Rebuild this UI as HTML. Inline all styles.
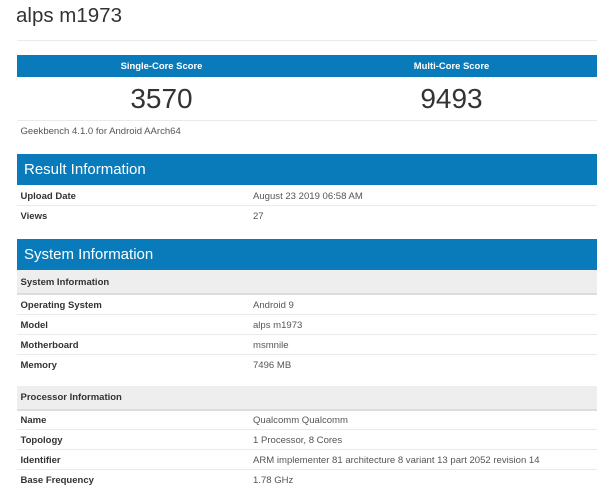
<!DOCTYPE html>
<html><head><meta charset="utf-8"><style>
html,body{margin:0;padding:0;background:#fff;width:600px;height:496px;overflow:hidden}
#p{position:relative;width:600px;height:496px;overflow:hidden;font-family:"Liberation Sans",sans-serif;filter:blur(0.35px)}
#p div{position:absolute;white-space:nowrap}
.b{left:16.5px;width:580px;background:#0a7bba}
.line{left:16.5px;width:580px;height:1px;background:#eaeaea}
.g{left:16.5px;width:580px;height:23px;background:#eeeeee;border-bottom:2px solid #dddddd}
.h{left:24px;color:#fff;font-size:15px;line-height:20px}
.k{left:20.5px;font-size:9.5px;font-weight:bold;color:#333;line-height:14px}
.v{left:253px;font-size:9.55px;color:#555;line-height:14px}
.c{text-align:center;width:290px}
.s{color:#fff;font-size:9.45px;font-weight:bold;line-height:14px;top:60px}
.n{color:#333;font-size:28px;line-height:32px;top:83px}
</style></head><body><div id="p">
<div style="left:16px;top:4px;font-size:20.5px;line-height:24px;color:#333">alps m1973</div>
<div class="line" style="top:40px"></div>
<div class="b" style="top:55px;height:22px"></div>
<div class="c s" style="left:16.5px">Single-Core Score</div>
<div class="c s" style="left:306.5px">Multi-Core Score</div>
<div class="c n" style="left:16.5px">3570</div>
<div class="c n" style="left:306.5px">9493</div>
<div class="line" style="top:120px"></div>
<div class="v" style="left:20.5px;top:125px;width:200px">Geekbench 4.1.0 for Android AArch64</div>

<div class="b" style="top:154px;height:31px"></div>
<div class="h" style="top:160px">Result Information</div>
<div class="k" style="top:190px">Upload Date</div><div class="v" style="top:190px">August 23 2019 06:58 AM</div>
<div class="line" style="top:205px"></div>
<div class="k" style="top:210px">Views</div><div class="v" style="top:210px">27</div>

<div class="b" style="top:239px;height:31px"></div>
<div class="h" style="top:245px">System Information</div>
<div class="g" style="top:270px"></div>
<div class="k" style="top:276px">System Information</div>
<div class="k" style="top:299px">Operating System</div><div class="v" style="top:299px">Android 9</div>
<div class="line" style="top:314px"></div>
<div class="k" style="top:319px">Model</div><div class="v" style="top:319px">alps m1973</div>
<div class="line" style="top:334px"></div>
<div class="k" style="top:339px">Motherboard</div><div class="v" style="top:339px">msmnile</div>
<div class="line" style="top:354px"></div>
<div class="k" style="top:359px">Memory</div><div class="v" style="top:359px">7496 MB</div>

<div class="g" style="top:386px"></div>
<div class="k" style="top:391px">Processor Information</div>
<div class="k" style="top:414px">Name</div><div class="v" style="top:414px">Qualcomm Qualcomm</div>
<div class="line" style="top:429px"></div>
<div class="k" style="top:434px">Topology</div><div class="v" style="top:434px">1 Processor, 8 Cores</div>
<div class="line" style="top:449px"></div>
<div class="k" style="top:454px">Identifier</div><div class="v" style="top:454px">ARM implementer 81 architecture 8 variant 13 part 2052 revision 14</div>
<div class="line" style="top:469px"></div>
<div class="k" style="top:474px">Base Frequency</div><div class="v" style="top:474px">1.78 GHz</div>
</div></body></html>
